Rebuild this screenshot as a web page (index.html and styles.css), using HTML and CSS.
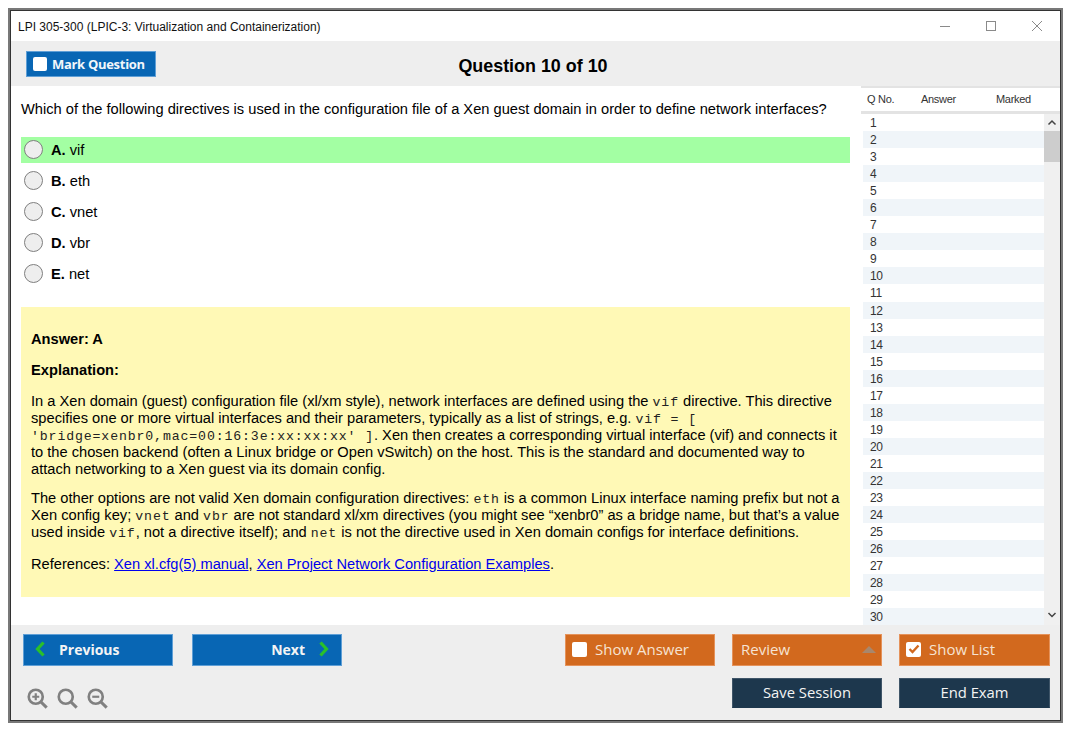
FILE: index.html
```html
<!DOCTYPE html>
<html lang="en">
<head>
<meta charset="utf-8">
<title>LPI 305-300</title>
<link rel="stylesheet" href="styles.css">
</head>
<body>
<div class="window">
  <header class="titlebar">
    <span class="title">LPI 305-300 (LPIC-3: Virtualization and Containerization)</span>
    <div class="win-controls">
      <svg width="12" height="12" viewBox="0 0 12 12"><path d="M1 6.500h10" stroke="#8a8a8a" fill="none"/></svg>
      <svg width="12" height="12" viewBox="0 0 12 12"><rect x="1.500" y="1.500" width="9" height="9" stroke="#8a8a8a" fill="none"/></svg>
      <svg width="12" height="12" viewBox="0 0 12 12"><path d="M1 1l10 10M11 1L1 11" stroke="#8a8a8a" fill="none"/></svg>
    </div>
  </header>
  <div class="toolbar">
    <button class="mark-btn"><span class="box"></span>Mark Question</button>
    <h1 class="qtitle">Question 10 of 10</h1>
  </div>
  <div class="main">
    <section class="content">
      <p class="question">Which of the following directives is used in the configuration file of a Xen guest domain in order to define network interfaces?</p>
      <div class="options">
        <div class="option correct"><span class="radio"></span><span class="opt-text"><b>A.</b> vif</span></div>
        <div class="option"><span class="radio"></span><span class="opt-text"><b>B.</b> eth</span></div>
        <div class="option"><span class="radio"></span><span class="opt-text"><b>C.</b> vnet</span></div>
        <div class="option"><span class="radio"></span><span class="opt-text"><b>D.</b> vbr</span></div>
        <div class="option"><span class="radio"></span><span class="opt-text"><b>E.</b> net</span></div>
      </div>
      <div class="answer">
        <p class="head"><b>Answer: A</b></p>
        <p class="head"><b>Explanation:</b></p>
        <p class="para-a">In a Xen domain (guest) configuration file (xl/xm style), network interfaces are defined using the <code>vif</code> directive. This directive specifies one or more virtual interfaces and their parameters, typically as a list of strings, e.g. <code>vif = [ 'bridge=xenbr0,mac=00:16:3e:xx:xx:xx' ]</code>. Xen then creates a corresponding virtual interface (vif) and connects it to the chosen backend (often a Linux bridge or Open vSwitch) on the host. This is the standard and documented way to attach networking to a Xen guest via its domain config.</p>
        <p class="para-b">The other options are not valid Xen domain configuration directives: <code>eth</code> is a common Linux interface naming prefix but not a Xen config key; <code>vnet</code> and <code>vbr</code> are not standard xl/xm directives (you might see “xenbr0” as a bridge name, but that’s a value used inside <code>vif</code>, not a directive itself); and <code>net</code> is not the directive used in Xen domain configs for interface definitions.</p>
        <p>References: <a href="#">Xen xl.cfg(5) manual</a>, <a href="#">Xen Project Network Configuration Examples</a>.</p>
      </div>
    </section>
    <aside class="list">
      <div class="list-head"><span class="c1">Q No.</span><span class="c2">Answer</span><span class="c3">Marked</span></div>
      <div class="list-body">
        <div class="rows">
          <div>1</div><div>2</div><div>3</div><div>4</div><div>5</div><div>6</div><div>7</div><div>8</div><div>9</div><div>10</div>
          <div>11</div><div>12</div><div>13</div><div>14</div><div>15</div><div>16</div><div>17</div><div>18</div><div>19</div><div>20</div>
          <div>21</div><div>22</div><div>23</div><div>24</div><div>25</div><div>26</div><div>27</div><div>28</div><div>29</div><div>30</div>
        </div>
        <div class="scrollbar">
          <svg class="arrow" width="16" height="17" viewBox="0 0 16 17"><path d="M4.500 10.500L8 7l3.500 3.500" stroke="#444" stroke-width="1.500" fill="none"/></svg>
          <div class="thumb"></div>
          <svg class="arrow down" width="16" height="17" viewBox="0 0 16 17"><path d="M4.500 5L8 8.500 11.500 5" stroke="#444" stroke-width="1.500" fill="none"/></svg>
        </div>
      </div>
    </aside>
  </div>
  <footer class="bottom">
    <div class="bottom-left">
      <div class="nav">
        <button class="btn blue prev"><svg width="12" height="16" viewBox="0 0 12 16"><path d="M9.500 1.500L3.500 8l6 6.500" stroke="#2ac02a" stroke-width="3.200" fill="none"/></svg>Previous</button>
        <button class="btn blue next">Next<svg width="12" height="16" viewBox="0 0 12 16"><path d="M2.500 1.500L8.500 8l-6 6.500" stroke="#2ac02a" stroke-width="3.200" fill="none"/></svg></button>
      </div>
      <div class="zoom">
        <svg width="21" height="21" viewBox="0 0 24 24"><circle cx="10" cy="10" r="8" stroke="#808080" stroke-width="3" fill="none"/><path d="M16 16l6.500 6.500" stroke="#808080" stroke-width="3.500" fill="none"/><path d="M6 10h8M10 6v8" stroke="#808080" stroke-width="2.500" fill="none"/></svg>
        <svg width="21" height="21" viewBox="0 0 24 24"><circle cx="10" cy="10" r="8" stroke="#808080" stroke-width="3" fill="none"/><path d="M16 16l6.500 6.500" stroke="#808080" stroke-width="3.500" fill="none"/></svg>
        <svg width="21" height="21" viewBox="0 0 24 24"><circle cx="10" cy="10" r="8" stroke="#808080" stroke-width="3" fill="none"/><path d="M16 16l6.500 6.500" stroke="#808080" stroke-width="3.500" fill="none"/><path d="M6 10h8" stroke="#808080" stroke-width="2.500" fill="none"/></svg>
      </div>
    </div>
    <div class="actions">
      <button class="btn orange"><span class="box"></span>Show Answer</button>
      <button class="btn orange review">Review<svg width="14" height="7" viewBox="0 0 14 7"><path d="M7 0l7 7H0z" fill="#a8876c"/></svg></button>
      <button class="btn orange"><span class="box checked"><svg width="12" height="12" viewBox="0 0 12 12"><path d="M1.500 6l3 3 6-6.500" stroke="#d2691e" stroke-width="2.400" fill="none"/></svg></span>Show List</button>
      <span></span>
      <button class="btn navy">Save Session</button>
      <button class="btn navy">End Exam</button>
    </div>
  </footer>
</div>
</body>
</html>
```
FILE: styles.css
```css
* { box-sizing: border-box; }
html, body { margin: 0; height: 100%; background: #fff; }
body { padding: 10px 14px 14px 10px; font-family: "Liberation Sans", Arial, sans-serif; color: #000; }
.window {
  width: 1051px;
  height: 711px;
  border: 1px solid #333;
  outline: 2px solid #787878;
  display: flex;
  flex-direction: column;
  background: #fff;
}
.titlebar {
  height: 30px;
  flex: none;
  display: flex;
  align-items: center;
  justify-content: space-between;
  padding: 2px 17px 0 7px;
}
.title { font-size: 12px; color: #111; }
.win-controls { display: flex; gap: 34px; margin-top: -2px; }
.toolbar {
  height: 45px;
  flex: none;
  background: #eeeeee;
  display: grid;
  grid-template-columns: 1fr auto 1fr;
  align-items: center;
  padding: 0 15px;
}
.mark-btn {
  width: 130px;
  height: 26px;
  margin-top: 1px;
  padding: 0 0 0 6px;
  border: 1px solid #5f9fd6;
  background: #0866b4;
  color: #f2f6fa;
  font: 700 13px "Open Sans", sans-serif;
  letter-spacing: -0.3px;
  display: flex;
  align-items: center;
  gap: 5px;
  justify-self: start;
}
.box {
  width: 14px;
  height: 14px;
  flex: none;
  background: #fff;
  border-radius: 2px;
  display: inline-flex;
  align-items: center;
  justify-content: center;
}
.qtitle {
  margin: 6px 5px 0 0;
  font-size: 17.900px;
  font-weight: 700;
}
.main { flex: 1; min-height: 0; display: flex; }
.content { width: 850px; padding: 15px 0 0 10px; flex: none; }
.question { margin: 0 0 19px; font-size: 14.670px; line-height: 17px; }
.options { display: flex; flex-direction: column; gap: 5px; width: 829px; font-size: 14.670px; }
.option { height: 26px; display: flex; align-items: center; gap: 8px; padding-left: 3px; }
.opt-text { padding-bottom: 1px; }
.correct { background: #a3ffa3; }
.radio {
  width: 19px;
  height: 19px;
  margin-bottom: 1px;
  border-radius: 50%;
  background: #eeeeee;
  border: 1px solid #7f7f7f;
  flex: none;
}
.answer {
  width: 829px;
  height: 290px;
  margin-top: 20px;
  padding: 24px 10px 0;
  background: #fff9b6;
  font-size: 14.670px;
  line-height: 17px;
}
.answer p { margin: 0 0 14px; }
.answer .para-a { margin-bottom: 12px; }
.answer .para-b { margin-bottom: 15px; }
code {
  font-family: "Liberation Mono", "Courier New", monospace;
  font-size: 13.200px;
  letter-spacing: 0.880px;
  line-height: 0;
  color: #222;
}
a { color: #0000ee; }
.list { width: 199px; flex: none; }
.list-head {
  height: 28px;
  padding-bottom: 2px;
  border-top: 2px solid #e3e3e3;
  border-bottom: 3px solid #e3e3e3;
  font-size: 11px;
  display: flex;
  align-items: center;
  color: #333;
  letter-spacing: -0.3px;
}
.c1 { width: 60px; padding-left: 6px; }
.c2 { width: 75px; }
.list-body { display: flex; height: 511px; overflow: hidden; }
.rows { width: 183px; font-size: 12px; color: #333; letter-spacing: -0.3px; padding-left: 2px; }
.rows div { height: 17.050px; line-height: 17px; padding: 1px 0 0 7px; }
.rows div:nth-child(even) { background: #f0f5f9; }
.scrollbar { width: 16px; background: #f0f0f0; display: flex; flex-direction: column; }
.arrow { flex: none; }
.thumb { height: 31px; background: #cdcdcd; }
.down { margin-top: auto; }
.bottom {
  height: 95px;
  flex: none;
  background: #eeeeee;
  display: flex;
  justify-content: space-between;
  padding: 9px 10px 0 12px;
}
.nav { display: flex; gap: 19px; }
.btn {
  height: 32px;
  width: 150px;
  padding: 0 6px 2px;
  color: #f4f4f4;
  font: 400 15px "Open Sans", sans-serif;
  display: flex;
  align-items: center;
  border: 1px solid transparent;
}
.blue { background: #0866b4; border-color: #5f9fd6; font-weight: 700; font-size: 14px; }
.prev { gap: 13px; padding-left: 10px; }
.next { justify-content: flex-end; gap: 13px; padding-right: 11px; }
.zoom { display: flex; gap: 9px; margin-top: 22px; padding-left: 4px; }
.actions {
  display: grid;
  grid-template-columns: 150px 150px 151px;
  column-gap: 17px;
  row-gap: 12px;
  grid-auto-rows: min-content;
}
.actions > :nth-child(3) { width: 151px; }
.actions > :nth-child(6) { width: 151px; }
.orange { background: #d2691e; border-color: #e5925a; gap: 8px; color: #f6e3d3; }
.orange .box { width: 15px; height: 15px; }
.review { justify-content: space-between; padding-left: 8px; padding-right: 5px; }
.navy { background: #1d374d; justify-content: center; height: 30px; border-color: #3f5568 #3f5568 #1d374d; font-size: 14.800px; }
```
